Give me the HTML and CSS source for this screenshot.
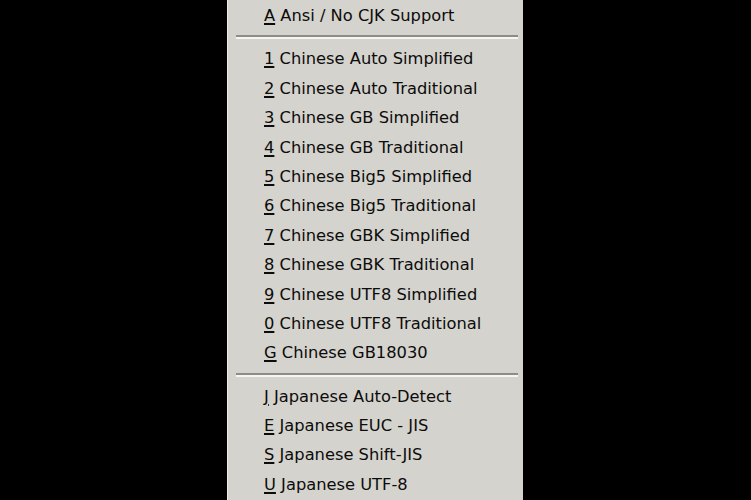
FILE: index.html
```html
<!DOCTYPE html>
<html>
<head>
<meta charset="utf-8">
<link rel="stylesheet" href="styles.css">
</head>
<body>
<div class="menu">
  <div class="item"><span class="key">A</span> Ansi / No CJK Support</div>
  <div class="sep"></div>
  <div class="item"><span class="key">1</span> Chinese Auto Simplified</div>
  <div class="item"><span class="key">2</span> Chinese Auto Traditional</div>
  <div class="item"><span class="key">3</span> Chinese GB Simplified</div>
  <div class="item"><span class="key">4</span> Chinese GB Traditional</div>
  <div class="item"><span class="key">5</span> Chinese Big5 Simplified</div>
  <div class="item"><span class="key">6</span> Chinese Big5 Traditional</div>
  <div class="item"><span class="key">7</span> Chinese GBK Simplified</div>
  <div class="item"><span class="key">8</span> Chinese GBK Traditional</div>
  <div class="item"><span class="key">9</span> Chinese UTF8 Simplified</div>
  <div class="item"><span class="key">0</span> Chinese UTF8 Traditional</div>
  <div class="item"><span class="key">G</span> Chinese GB18030</div>
  <div class="sep"></div>
  <div class="item"><span class="key">J</span> Japanese Auto-Detect</div>
  <div class="item"><span class="key">E</span> Japanese EUC - JIS</div>
  <div class="item"><span class="key">S</span> Japanese Shift-JIS</div>
  <div class="item"><span class="key">U</span> Japanese UTF-8</div>
</div>
</body>
</html>
```
FILE: styles.css
```css
html, body {
  margin: 0;
  padding: 0;
  background: #000;
  height: 500px;
  overflow: hidden;
}
.menu {
  margin-left: 227px;
  width: 295px;
  height: 500px;
  background: #d5d3cd;
  border-left: 1px solid #eeede9;
  padding-top: 1px;
  box-sizing: content-box;
  font-family: "DejaVu Sans", sans-serif;
  font-size: 16.3px;
  color: #0c0c0c;
}
.item {
  height: 29.4px;
  line-height: 29.4px;
  padding-left: 36px;
  white-space: nowrap;
}
.key {
  text-decoration: underline;
  text-decoration-thickness: 1.5px;
  text-underline-offset: 2px;
}
.sep {
  margin: 5px 5px 5px 8px;
  height: 2px;
  background: #8e8c87;
  border-bottom: 2px solid #f6f5f2;
}
```
